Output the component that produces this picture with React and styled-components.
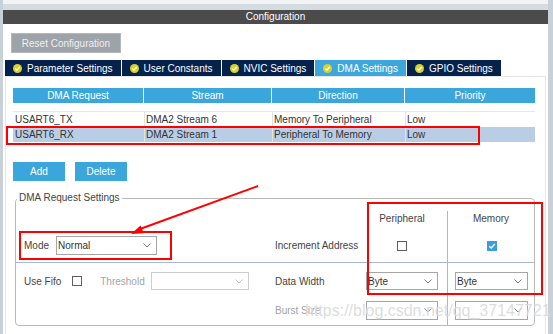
import React from "react";
import styled, { createGlobalStyle } from "styled-components";

const GlobalStyle = createGlobalStyle`
  html, body {
    margin: 0;
    padding: 0;
    background: #c9d1d8;
  }
  body {
    font-family: "Liberation Sans", Arial, sans-serif;
    font-size: 10px;
  }
`;

const Frame = styled.div`
  position: relative;
  width: 553px;
  height: 334px;
  overflow: hidden;
  box-sizing: border-box;
  padding: 0 5px 0 3px;
  background: #c9d1d8;
  display: flex;
  flex-direction: column;
`;

const TopEdge = styled.div`
  height: 4px;
  background: #f1f3f5;
`;

const Band = styled.div`
  height: 6px;
  background: #d4dbe1;
`;

const TitleBar = styled.div`
  height: 14px;
  line-height: 14px;
  background: #4b4b4b;
  color: #fff;
  text-align: center;
`;

const Body = styled.div`
  flex: 1;
  min-height: 0;
  background: #fff;
  display: flex;
  flex-direction: column;
`;

const ResetButton = styled.div`
  margin: 9px 0 0 8px;
  width: 110px;
  height: 20px;
  box-sizing: border-box;
  border: 1px solid #b3b8bd;
  background: #9da3a9;
  color: #eef0f2;
  display: flex;
  align-items: center;
  justify-content: center;
`;

const TabBar = styled.div`
  display: flex;
  gap: 1px;
  height: 16px;
  margin: 7px 0 0 2px;
`;

const Tab = styled.div`
  display: flex;
  align-items: center;
  gap: 5px;
  padding: 0 8px;
  background: ${(p) => (p.$active ? "#3da7dc" : "#04224c")};
  color: #fff;
  white-space: nowrap;
`;

const Panel = styled.div`
  flex: 1;
  margin: 0 2px;
  border: 1px solid #e3e7eb;
  border-bottom: none;
  padding: 11px 0 0 7px;
  display: flex;
  flex-direction: column;
`;

const HeadRow = styled.div`
  display: grid;
  grid-template-columns: 130px 127px 132px 130px;
  column-gap: 1px;
  width: 522px;
`;

const HeadCell = styled.div`
  height: 15px;
  line-height: 15px;
  background: #3ba6dc;
  color: #fff;
  text-align: center;
`;

const Rows = styled.div`
  margin-top: 8px;
  width: 522px;
  border-top: 1px solid #e8e8e8;
`;

const Row = styled.div`
  display: grid;
  grid-template-columns: 131px 128px 133px 130px;
  height: 15px;
  background: ${(p) => (p.$selected ? "#b9cde5" : "#fff")};
`;

const Cell = styled.div`
  line-height: 15px;
  padding-left: 1px;
  color: #333;
  border-left: 1px solid ${(p) => (p.$first ? "transparent" : "#e2e2e2")};
  white-space: nowrap;
`;

const ActionBar = styled.div`
  display: flex;
  gap: 10px;
  margin-top: 20px;
`;

const ActionButton = styled.div`
  width: 52px;
  height: 19px;
  background: #3ba6dc;
  color: #fff;
  display: flex;
  align-items: center;
  justify-content: center;
`;

const Group = styled.fieldset`
  margin: 11px 0 0 2px;
  padding: 0;
  width: 520px;
  box-sizing: border-box;
  border: 1px solid #b9b9b9;
  border-radius: 4px;
`;

const Legend = styled.legend`
  margin-left: 1px;
  padding: 0 2px;
  line-height: 12px;
  color: #444;
`;

const SettingsGrid = styled.div`
  display: grid;
  grid-template-columns: 254px 96px 81px 87px;
  grid-template-rows: 28px 31px 33px 29px;
`;

const GridCell = styled.div`
  display: flex;
  align-items: center;
  box-sizing: border-box;
  color: ${(p) => (p.$muted ? "#a3a3a3" : "#444")};
  ${(p) => p.$line && "border-bottom: 1px solid #a9b6d8;"}
  ${(p) => p.$split && "border-left: 1px solid #a9b6d8;"}
  ${(p) => p.$pad && `padding: ${p.$pad};`}
  ${(p) => p.$center && "justify-content: center;"}
`;

const TitleCell = styled.div`
  display: flex;
  justify-content: center;
  align-items: center;
  color: #444;
  box-sizing: border-box;
  ${(p) => p.$split && "margin-top: 7px; border-left: 1px solid #a9b6d8; padding-bottom: 7px;"}
  ${(p) => !p.$split && "padding: 0 9px 0 0;"}
`;

const FieldLabel = styled.span`
  color: ${(p) => (p.$muted ? "#a3a3a3" : "#444")};
  margin-right: ${(p) => p.$gap || 0}px;
  white-space: nowrap;
`;

const SelectBox = styled.div`
  width: ${(p) => p.$w}px;
  height: ${(p) => p.$h || 18}px;
  box-sizing: border-box;
  border: 1px solid ${(p) => (p.$disabled ? "#cdcdcd" : "#a6a6a6")};
  background: #fff;
  color: #333;
  padding: 0 5px 0 1px;
  display: flex;
  align-items: center;
  justify-content: space-between;
`;

const Box = styled.div`
  width: 10px;
  height: 10px;
  box-sizing: border-box;
  border: 1px solid ${(p) => (p.$checked ? "#3b9ddd" : "#5f5f5f")};
  background: ${(p) => (p.$checked ? "#3b9ddd" : "#fff")};
  display: flex;
  align-items: center;
  justify-content: center;
  margin-right: ${(p) => p.$gap || 0}px;
`;

const Overlay = styled.svg`
  position: absolute;
  left: 0;
  top: 0;
  pointer-events: none;
`;

const Watermark = styled.div`
  position: absolute;
  left: 305px;
  top: 302px;
  font-size: 16px;
  color: rgba(185, 185, 185, 0.5);
  text-shadow: 0 0 1px rgba(255, 255, 255, 0.9);
  white-space: nowrap;
  pointer-events: none;
`;

function CheckDot() {
  return (
    <svg width="9" height="9" viewBox="0 0 9 9">
      <circle cx="4.5" cy="4.5" r="4.5" fill="#d9d02c" />
      <path d="M2.3 4.6 L3.9 6.1 L6.7 3" fill="none" stroke="#fff" strokeWidth="1.3" />
    </svg>
  );
}

function Chevron({ light }) {
  return (
    <svg width="8" height="5" viewBox="0 0 8 5">
      <path d="M0.5 0.5 L4 4 L7.5 0.5" fill="none" stroke={light ? "#c4c4c4" : "#777"} strokeWidth="1" />
    </svg>
  );
}

function Select({ value, w, h, disabled }) {
  return (
    <SelectBox $w={w} $h={h} $disabled={disabled}>
      <span>{value}</span>
      <Chevron light={disabled} />
    </SelectBox>
  );
}

function Checkbox({ checked, gap }) {
  return (
    <Box $checked={checked} $gap={gap}>
      {checked && (
        <svg width="8" height="8" viewBox="0 0 8 8">
          <path d="M1.3 4.2 L3.2 6 L6.8 2" fill="none" stroke="#fff" strokeWidth="1.4" />
        </svg>
      )}
    </Box>
  );
}

const tabs = [
  "Parameter Settings",
  "User Constants",
  "NVIC Settings",
  "DMA Settings",
  "GPIO Settings",
];

const requests = [
  ["USART6_TX", "DMA2 Stream 6", "Memory To Peripheral", "Low"],
  ["USART6_RX", "DMA2 Stream 1", "Peripheral To Memory", "Low"],
];

export default function App() {
  return (
    <>
      <GlobalStyle />
      <Frame>
        <TopEdge />
        <Band />
        <TitleBar>Configuration</TitleBar>
        <Body>
          <ResetButton>Reset Configuration</ResetButton>
          <TabBar>
            {tabs.map((t) => (
              <Tab key={t} $active={t === "DMA Settings"}>
                <CheckDot />
                {t}
              </Tab>
            ))}
          </TabBar>
          <Panel>
            <HeadRow>
              {["DMA Request", "Stream", "Direction", "Priority"].map((h) => (
                <HeadCell key={h}>{h}</HeadCell>
              ))}
            </HeadRow>
            <Rows>
              {requests.map((r, i) => (
                <Row key={r[0]} $selected={i === 1}>
                  {r.map((c, j) => (
                    <Cell key={j} $first={j === 0}>
                      {c}
                    </Cell>
                  ))}
                </Row>
              ))}
            </Rows>
            <ActionBar>
              <ActionButton>Add</ActionButton>
              <ActionButton>Delete</ActionButton>
            </ActionBar>
            <Group>
              <Legend>DMA Request Settings</Legend>
              <SettingsGrid>
                <div />
                <div />
                <TitleCell>Peripheral</TitleCell>
                <TitleCell $split>Memory</TitleCell>

                <GridCell $line $pad="0 0 3px 8px">
                  <FieldLabel $gap={7}>Mode</FieldLabel>
                  <Select value="Normal" w={101} h={19} />
                </GridCell>
                <GridCell $line $pad="0 0 3px 5px">
                  <FieldLabel>Increment Address</FieldLabel>
                </GridCell>
                <GridCell $line $center $pad="0 9px 3px 0">
                  <Checkbox />
                </GridCell>
                <GridCell $line $split $center $pad="0 6px 3px 7px">
                  <Checkbox checked />
                </GridCell>

                <GridCell $pad="3px 0 0 8px">
                  <FieldLabel $gap={11}>Use Fifo</FieldLabel>
                  <Checkbox gap={18} />
                  <FieldLabel $muted $gap={6}>
                    Threshold
                  </FieldLabel>
                  <Select value="" w={98} disabled />
                </GridCell>
                <GridCell $pad="3px 0 0 5px">
                  <FieldLabel>Data Width</FieldLabel>
                </GridCell>
                <GridCell $pad="3px 9px 0 0">
                  <Select value="Byte" w={72} />
                </GridCell>
                <GridCell $split $pad="3px 6px 0 7px">
                  <Select value="Byte" w={73} />
                </GridCell>

                <div />
                <GridCell $muted $pad="0 0 0 5px">
                  <FieldLabel $muted>Burst Size</FieldLabel>
                </GridCell>
                <GridCell $pad="0 9px 0 0">
                  <Select value="" w={72} h={19} />
                </GridCell>
                <GridCell $split $pad="0 6px 0 7px">
                  <Select value="" w={73} h={19} />
                </GridCell>
              </SettingsGrid>
            </Group>
          </Panel>
        </Body>

        <Overlay width="553" height="334" viewBox="0 0 553 334">
          <g fill="none" stroke="#ff0000" strokeWidth="2">
            <rect x="7" y="127" width="472" height="17" />
            <rect x="20" y="232" width="151" height="27" />
            <rect x="368" y="203" width="174" height="91" />
            <line x1="258" y1="186" x2="140" y2="229" />
          </g>
          <polygon points="131,234 143.8,233.2 140.6,225.6" fill="#ff0000" />
        </Overlay>
        <Watermark>https://blog.csdn.net/qq_37147721</Watermark>
      </Frame>
    </>
  );
}
